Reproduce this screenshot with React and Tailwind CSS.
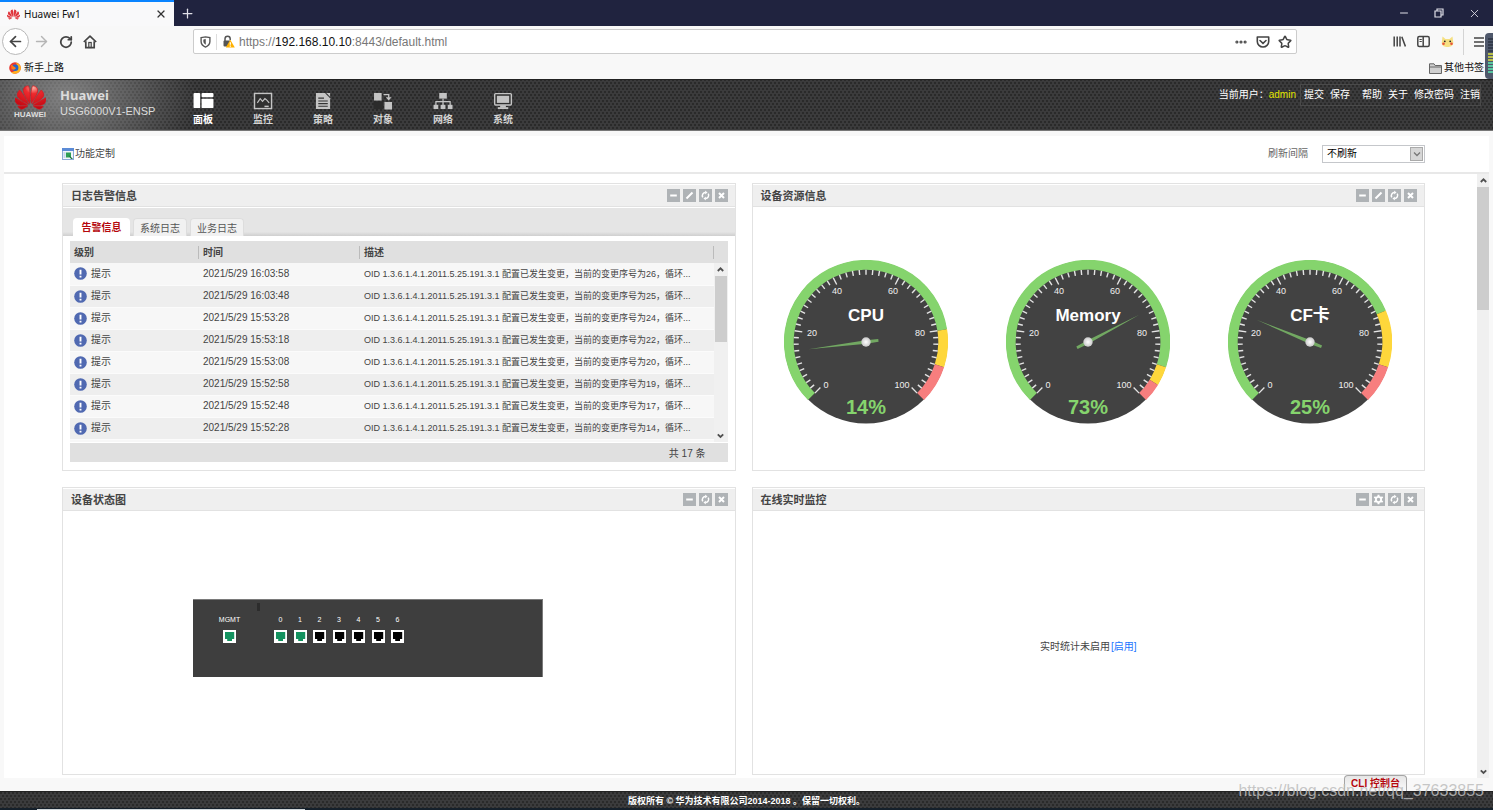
import React from 'react';
import { ArrowLeft, ArrowRight, House, Minus, Plus, RotateCw, Star, X, Ellipsis, Menu } from 'lucide-react';
import { SiHuawei } from 'react-icons/si';

const NAV_ITEMS = [
    {
        label: '面板',
        active: true,
        icon: (
            <g fill="#fff">
                <rect x="0" y="1" width="7" height="16" rx="1" />
                <rect x="8.5" y="1" width="12.5" height="4.5" rx="1" />
                <rect x="8.5" y="7" width="12.5" height="10" rx="1" />
            </g>
        ),
    },
    {
        label: '监控',
        icon: (
            <g fill="none" stroke="#c4c4c4">
                <rect x="1" y="1.5" width="18" height="16" fill="#303030" strokeWidth="1.5" />
                <path d="M4 11.5 L7 7 L9.5 10 L12 7 L14 8.5 L16.5 11.5" strokeWidth="1.2" />
                <path d="M11.5 15.2h4.5" strokeWidth="1.6" />
            </g>
        ),
    },
    {
        label: '策略',
        icon: (
            <g>
                <path d="M2.5 1H12L17.5 6.5V18H2.5Z" fill="#c4c4c4" />
                <path d="M13.5 1H17.5V5Z" fill="#c4c4c4" />
                <path d="M5 6.5h6M5 9.5h10M5 12.3h10M5 15h10" stroke="#333" strokeWidth="1.2" />
            </g>
        ),
    },
    {
        label: '对象',
        icon: (
            <g>
                <rect x="0" y="10" width="10" height="8" fill="#2b2b2b" />
                <rect x="0.5" y="1" width="8" height="8" fill="#c4c4c4" />
                <rect x="11.5" y="10.5" width="8" height="8" fill="#c4c4c4" />
                <path d="M10.5 2.8H16V6" fill="none" stroke="#c4c4c4" strokeWidth="1.4" />
                <path d="M13 5.5h6L16 9Z" fill="#c4c4c4" />
            </g>
        ),
    },
    {
        label: '网络',
        icon: (
            <g fill="#c4c4c4">
                <rect x="6" y="1" width="8" height="6" />
                <rect x="0" y="13.5" width="5" height="4.5" />
                <rect x="7.5" y="13.5" width="5" height="4.5" />
                <rect x="15" y="13.5" width="5" height="4.5" />
                <path d="M10 7v7M2.5 14V10.2H17.5V14" fill="none" stroke="#c4c4c4" strokeWidth="1.3" />
            </g>
        ),
    },
    {
        label: '系统',
        icon: (
            <g fill="#c4c4c4">
                <rect x="1.2" y="1.7" width="17.6" height="12" rx="1" fill="#303030" stroke="#c4c4c4" strokeWidth="1.5" />
                <rect x="3.5" y="4" width="13" height="7.5" />
                <rect x="7" y="14" width="6" height="2.5" />
                <rect x="4.5" y="16" width="11" height="2" />
            </g>
        ),
    },
];

const ALARMS = [
    { time: '2021/5/29 16:03:58', seq: 26 },
    { time: '2021/5/29 16:03:48', seq: 25 },
    { time: '2021/5/29 15:53:28', seq: 24 },
    { time: '2021/5/29 15:53:18', seq: 22 },
    { time: '2021/5/29 15:53:08', seq: 20 },
    { time: '2021/5/29 15:52:58', seq: 19 },
    { time: '2021/5/29 15:52:48', seq: 17 },
    { time: '2021/5/29 15:52:28', seq: 14 },
];

const GAUGES = [
    { title: 'CPU', value: 14, warn: 80, critical: 90 },
    { title: 'Memory', value: 73, warn: 90, critical: 95 },
    { title: 'CF卡', value: 25, warn: 75, critical: 90 },
];

const PORTS = [
    { label: '0', up: true },
    { label: '1', up: true },
    { label: '2', up: false },
    { label: '3', up: false },
    { label: '4', up: false },
    { label: '5', up: false },
    { label: '6', up: false },
];

const MESH =
    'bg-[#3b3b3c] bg-[radial-gradient(circle_at_1px_1px,#2a2a2a_1px,transparent_1px),radial-gradient(circle_at_3px_4px,#2a2a2a_1px,transparent_1px)] bg-[length:4px_6px]';

// 0-100 on the dial runs over 270 degrees, starting bottom left
function polar(percent, radius) {
    const a = ((225 - percent * 2.7) * Math.PI) / 180;
    return [82 + radius * Math.cos(a), 82 - radius * Math.sin(a)];
}

function Band({ from, to, color }) {
    const [x1, y1] = polar(from, 77.2);
    const [x2, y2] = polar(to, 77.2);
    const large = (to - from) * 2.7 > 180 ? 1 : 0;
    return (
        <path
            d={`M${x1} ${y1} A77.2 77.2 0 ${large} 1 ${x2} ${y2}`}
            fill="none"
            stroke={color}
            strokeWidth="9.8"
        />
    );
}

function Gauge({ title, value, warn, critical }) {
    const ticks = Array.from({ length: 51 }, (_, i) => i * 2);
    const labels = [
        [0, 42, 128],
        [20, 28, 76],
        [40, 53, 34],
        [60, 109, 34],
        [80, 136, 76],
        [100, 118, 128],
    ];
    return (
        <svg className="w-41 h-41 shrink-0" viewBox="0 0 164 164" fontFamily="Liberation Sans, Noto Sans CJK SC, sans-serif">
            <defs>
                <radialGradient id="hub">
                    <stop offset="0" stopColor="#fff" />
                    <stop offset="1" stopColor="#c9c9c9" />
                </radialGradient>
            </defs>
            <circle cx="82" cy="82" r="81.5" fill="#424242" />
            <Band from={0} to={warn} color="#85d46d" />
            <Band from={warn} to={critical} color="#fed73b" />
            <Band from={critical} to={100} color="#f77e7e" />
            {ticks.map((t) => {
                const [x1, y1] = polar(t, 72.3);
                const [x2, y2] = polar(t, t % 20 === 0 ? 64.5 : 67.3);
                return <line key={t} x1={x1} y1={y1} x2={x2} y2={y2} stroke="#e4e4e4" strokeWidth="1.4" />;
            })}
            {labels.map(([text, x, y]) => (
                <text key={text} x={x} y={y} fontSize="9" fill="#f0f0f0" textAnchor="middle">
                    {text}
                </text>
            ))}
            <text x="82" y="61" fontSize="17" fontWeight="bold" fill="#fff" textAnchor="middle">
                {title}
            </text>
            <text x="82" y="154" fontSize="20" fontWeight="bold" fill="#85d46d" textAnchor="middle">
                {value}%
            </text>
            <path
                d="M69.5 80.6 L82 80.2 L140 82 L82 83.8 L69.5 83.4Z"
                fill="#72a862"
                transform={`rotate(${value * 2.7 - 225} 82 82)`}
            />
            <circle cx="82" cy="82" r="4.7" fill="url(#hub)" />
        </svg>
    );
}

const TOOL_ICONS = {
    minimize: <path d="M3.2 6.5h6.6" strokeWidth="2" />,
    edit: <path d="M3.5 9.5 L9.5 3.5" strokeWidth="2" />,
    settings: (
        <g>
            <circle cx="6.5" cy="6.5" r="2.6" strokeWidth="1.8" />
            <path d="M6.5 1.8v2M6.5 9.2v2M2.3 4l1.8 1.1M8.9 7.9L10.7 9M2.3 9l1.8-1.1M8.9 5.1L10.7 4" strokeWidth="2" />
        </g>
    ),
    refresh: (
        <g strokeWidth="1.5">
            <path d="M3.8 8.3A3.2 3.2 0 0 1 6.6 3.4M9.2 4.7A3.2 3.2 0 0 1 6.4 9.6" />
            <path d="M6.2 1.8 L8.4 3.5 L6.2 5.2ZM6.8 7.8 L4.6 9.5 L6.8 11.2Z" fill="#fff" strokeWidth="0.2" />
        </g>
    ),
    close: <path d="M4 4l5 5M9 4L4 9" strokeWidth="2" />,
};

function Panel({ title, tools, children }) {
    return (
        <section className="flex flex-col min-w-0 bg-white border border-[#e2e2e2]">
            <header className="flex items-center justify-between h-[23px] shrink-0 pl-2 pr-[7px] bg-[#efefef] border-t border-t-white border-b border-b-[#e2e2e2]">
                <h2 className="text-[11px] leading-4 font-bold text-[#444]">{title}</h2>
                <div className="flex gap-[3px]">
                    {tools.map((tool) => (
                        <button key={tool} type="button" aria-label={tool} className="w-[13px] h-[13px] bg-[#afb3b6]">
                            <svg viewBox="0 0 13 13" className="block w-full h-full" fill="none" stroke="#fff">
                                {TOOL_ICONS[tool]}
                            </svg>
                        </button>
                    ))}
                </div>
            </header>
            {children}
        </section>
    );
}

function ScrollArrow({ up }) {
    return (
        <svg viewBox="0 0 13 13" className="block w-[13px] h-[13px] shrink-0" fill="none" stroke="#505050" strokeWidth="1.8">
            <path d={up ? 'M3.8 8 L6.5 5.3 L9.2 8' : 'M3.8 5.3 L6.5 8 L9.2 5.3'} />
        </svg>
    );
}

function BrowserChrome() {
    return (
        <div className="relative shrink-0 bg-[#f8f8f8] text-[#333]">
            <div className="flex h-[26px] bg-[#20233f] text-[#e0e0e8]">
                <div className="flex items-center w-[174px] h-full px-[7px] bg-[#f9f9fa] border-t-2 border-t-[#0a84ff] text-[#111]">
                    <SiHuawei className="w-[13px] h-[13px] text-[#e0353c]" />
                    <span className="ml-1 text-[10px] leading-4 font-['Noto_Sans','Noto_Sans_CJK_SC',sans-serif]">Huawei Fw1</span>
                    <button type="button" aria-label="关闭标签页" className="ml-auto text-[#333]">
                        <X size={12} strokeWidth={2.4} />
                    </button>
                </div>
                <button type="button" aria-label="新标签页" className="px-[6px]">
                    <Plus size={15} strokeWidth={2} />
                </button>
                <div className="flex items-center gap-6 ml-auto pr-3">
                    <button type="button" aria-label="最小化">
                        <Minus size={12} strokeWidth={2} />
                    </button>
                    <button type="button" aria-label="还原">
                        <svg viewBox="0 0 10 10" className="block w-[10px] h-[10px]" fill="none" stroke="currentColor">
                            <path d="M1 3h6v6H1zM3 3V1h6v6H7" strokeWidth="1.2" />
                        </svg>
                    </button>
                    <button type="button" aria-label="关闭">
                        <X size={13} strokeWidth={1.6} />
                    </button>
                </div>
            </div>

            <div className="flex items-center h-[31px] pl-[2px] pr-2 text-[#444]">
                <button type="button" aria-label="后退" className="flex items-center justify-center w-[27px] h-[27px] rounded-full border border-[#b8b8b8] bg-white">
                    <ArrowLeft size={17} strokeWidth={2.4} />
                </button>
                <button type="button" aria-label="前进" className="ml-1 text-[#b5b5b5]">
                    <ArrowRight size={17} strokeWidth={2} />
                </button>
                <button type="button" aria-label="刷新" className="ml-[9px]">
                    <RotateCw size={14} strokeWidth={3} />
                </button>
                <button type="button" aria-label="主页" className="ml-[10px]">
                    <svg viewBox="0 0 14 14" className="block w-[14px] h-[14px]" fill="none" stroke="currentColor" strokeWidth="1.7">
                        <path d="M.8 7 L7 1.2 L13.2 7" strokeLinejoin="round" />
                        <path d="M2.8 6.2V12.6H11.2V6.2" />
                        <rect x="5.8" y="7.5" width="2.4" height="5" strokeWidth="1.2" />
                    </svg>
                </button>
                <div className="flex items-center flex-1 h-[25px] ml-[96px] mr-[96px] pl-[6px] pr-1 bg-white border border-[#ccc] rounded-xs">
                    <svg viewBox="0 0 12 13" className="w-[11px] h-3" fill="none" stroke="#555" strokeWidth="1.5">
                        <path d="M1.2 1.8 L6 .9 L10.8 1.8 V6 C10.8 9 8.5 11 6 12 C3.5 11 1.2 9 1.2 6Z" />
                        <path d="M6 3.6V9C4.6 8 4 7 4 5.6V4Z" fill="#555" strokeWidth="0.6" />
                    </svg>
                    <span className="w-px h-4 mx-[5px] bg-[#ddd]" />
                    <svg viewBox="0 0 13 13" className="w-[13px] h-[13px]">
                        <path d="M3 6V3.8A2.6 2.6 0 0 1 8.2 3.8V5" fill="none" stroke="#555" strokeWidth="1.5" />
                        <rect x="1.5" y="5.5" width="7" height="6" rx="1" fill="#555" />
                        <path d="M8.3 4.8 L12.8 12.6 H3.8Z" fill="#ffb100" />
                        <path d="M8.3 7.3v2.5M8.3 10.5v1.2" stroke="#fff" strokeWidth="1.2" />
                    </svg>
                    <div
                        role="textbox"
                        aria-label="地址栏"
                        tabIndex={0}
                        className="ml-1 text-[12px] leading-4 text-[#777]"
                    >
                        https://<span className="text-[#111]">192.168.10.10</span>:8443/default.html
                    </div>
                    <div className="flex items-center gap-[8px] ml-auto">
                        <Ellipsis size={14} strokeWidth={3.4} />
                        <svg viewBox="0 0 14 14" className="w-[14px] h-[14px]" fill="none" stroke="currentColor" strokeWidth="1.6">
                            <path d="M1.3 2H12.7V6.5A5.7 5.5 0 0 1 1.3 6.5Z" strokeLinejoin="round" />
                            <path d="M4 5.5 L7 8.3 L10 5.5" strokeLinecap="round" />
                        </svg>
                        <Star size={14} strokeWidth={2.6} />
                    </div>
                </div>
                <div className="flex items-center h-full gap-[11px]">
                    <svg viewBox="0 0 13 13" className="w-[13px] h-[13px]" fill="none" stroke="currentColor" strokeWidth="1.5">
                        <path d="M1.2 1.5v10M4.2 1.5v10M7 1.5v10M8.8 1.8l3.6 9.6" />
                    </svg>
                    <svg viewBox="0 0 13 13" className="w-[13px] h-[13px]" fill="none" stroke="currentColor" strokeWidth="1.5">
                        <rect x="0.8" y="1.5" width="11.4" height="10" rx="1.5" />
                        <path d="M6.2 1.5v10" />
                        <path d="M2.5 4.5h2.3M2.5 6.5h2.3" strokeWidth="1" />
                    </svg>
                    <svg viewBox="0 0 13 13" className="w-[13px] h-[13px]">
                        <path d="M1.5 1.5 L4.5 4 H8.5 L11.5 1.5 L12.3 8 C12 11 9.5 12 6.5 12 C3.5 12 1 11 .7 8Z" fill="#f5e083" />
                        <circle cx="3.8" cy="6.3" r=".9" fill="#222" />
                        <circle cx="9.2" cy="6.3" r=".9" fill="#222" />
                        <circle cx="2.5" cy="8.8" r="1.3" fill="#e8533c" />
                        <circle cx="10.5" cy="8.8" r="1.3" fill="#e8533c" />
                    </svg>
                    <span className="w-px h-[26px] -mx-[2px] bg-[#d4d4d4]" />
                    <svg viewBox="0 0 12 12" className="w-3 h-3" stroke="currentColor" strokeWidth="1.5">
                        <path d="M1 2h10M1 6h10M1 10h10" />
                    </svg>
                </div>
            </div>

            <div className="flex items-center h-[22px] px-[9px] text-[10px] leading-4 text-[#111]">
                <a href="#start" className="flex items-center gap-[3px]">
                    <svg viewBox="0 0 12 12" className="w-3 h-3">
                        <circle cx="6" cy="6" r="5.8" fill="#e8372f" />
                        <path d="M6 11.8A5.8 5.8 0 0 0 11.5 4C10 1.5 8 1 7 .5C9 5 9 9 2 10.2A5.8 5.8 0 0 0 6 11.8Z" fill="#ffb21e" />
                        <circle cx="6.2" cy="5.8" r="3.2" fill="#2266c9" />
                        <path d="M2 3 C4 3 5 5 7 6 C6 8 4 8 2.5 7Z" fill="#ff7a1a" />
                    </svg>
                    新手上路
                </a>
                <a href="#bookmarks" className="flex items-center gap-[2px] ml-auto">
                    <svg viewBox="0 0 13 11" className="w-[13px] h-[11px]" fill="#cfcfcf" stroke="#666" strokeWidth="1">
                        <path d="M.5 10.5V.8H5L6.2 2.5H12.5V10.5ZM.5 4H12.5" />
                    </svg>
                    其他书签
                </a>
            </div>

            {/* level meter docked on the window edge */}
            <div className="absolute right-0 top-[33px] w-2 h-[46px] pt-[5px] pl-[3px] rounded-l-sm bg-[#4f586b]">
                <div className="h-[15px] bg-[repeating-linear-gradient(#343c4c_0_2px,transparent_2px_3px)]" />
                <div className="h-[9px] bg-[repeating-linear-gradient(#b9bf4a_0_2px,transparent_2px_3px)]" />
                <div className="h-[12px] bg-[repeating-linear-gradient(#58c5a0_0_2px,transparent_2px_3px)]" />
            </div>
        </div>
    );
}

function Header() {
    return (
        <header className={`shrink-0 ${MESH}`}>
            <div className="flex h-[52px] border-t border-t-[#222] border-b border-b-[#777] bg-[radial-gradient(ellipse_130px_90px_at_66px_16px,rgba(190,190,190,0.55),transparent)] text-white">
                <div className="flex flex-col items-center w-[60px] pt-[2px]">
                    <svg width="0" height="0" className="absolute">
                        <defs>
                            <radialGradient id="petal" cx="0.58" cy="0.08" r="0.85">
                                <stop offset="0" stopColor="#f9b3a6" />
                                <stop offset="0.3" stopColor="#ee2a2e" />
                                <stop offset="1" stopColor="#c40a14" />
                            </radialGradient>
                        </defs>
                    </svg>
                    <SiHuawei size={31} style={{ fill: 'url(#petal)', stroke: '#d8161e', strokeWidth: 0.5 }} />
                    <span className="-mt-[2px] text-[8px] leading-[8px] font-bold text-[#ddd]">HUAWEI</span>
                </div>
                <div className="w-[113px] pt-[7px] text-[#dcdcdc]">
                    <h1 className="text-[13px] leading-[17px] font-bold font-['Noto_Sans',sans-serif]">Huawei</h1>
                    <p className="text-[11px] leading-[15px] whitespace-nowrap">USG6000V1-ENSP</p>
                </div>
                <nav className="flex">
                    {NAV_ITEMS.map((item) => (
                        <a
                            key={item.label}
                            href="#nav"
                            className={`flex flex-col items-center w-[60px] pt-3 text-[10px] leading-[20px] font-bold ${item.active ? 'text-white' : 'text-[#d4d4d4]'}`}
                        >
                            <svg viewBox="0 0 21 19" className="w-[21px] h-[19px]">
                                {item.icon}
                            </svg>
                            {item.label}
                        </a>
                    ))}
                </nav>
                <div className="flex items-start ml-auto pt-1 pr-3 text-[10px] leading-[20px] whitespace-nowrap">
                    <span className="border-y border-transparent">当前用户：</span>
                    <span className="mr-1 border-y border-transparent text-[#e3e600]">admin</span>
                    <div className="flex gap-[6px] border border-[#4a4a4a] pl-[3px]">
                        <a href="#commit">提交</a>
                        <a href="#save">保存</a>
                        <a href="#help" className="ml-[6px]">帮助</a>
                        <a href="#about">关于</a>
                        <a href="#password">修改密码</a>
                        <a href="#logout">注销</a>
                    </div>
                </div>
            </div>
        </header>
    );
}

function AlarmPanel() {
    return (
        <Panel title="日志告警信息" tools={['minimize', 'edit', 'refresh', 'close']}>
            <div className="flex items-end gap-[3px] h-[28px] mt-px pl-[10px] shrink-0 bg-[linear-gradient(#e5e5e5_85%,#cfcfcf)] text-[10px] leading-[20px]">
                <button type="button" className="w-[57px] h-[18px] rounded-t-sm bg-white font-bold text-[#b5070d]">告警信息</button>
                <button type="button" className="w-[54px] h-[18px] rounded-t-sm border border-b-0 border-[#ddd] bg-[#f1f1f1] text-[#555]">系统日志</button>
                <button type="button" className="w-[54px] h-[18px] rounded-t-sm border border-b-0 border-[#ddd] bg-[#f1f1f1] text-[#555]">业务日志</button>
            </div>
            <div className="flex flex-col flex-1 min-h-0 pt-[5px] px-[7px] pb-2 text-[10px] text-[#444]">
                <div className="flex flex-1 min-h-0 overflow-hidden bg-[#f7f7f7]">
                    <div className="flex-1 min-w-0">
                        <table className="w-full table-fixed border-collapse text-left">
                            <thead>
                                <tr className="h-[22px] bg-[#e0e0e0]">
                                    <th className="w-[129px] p-0 pl-1"><span className="block leading-[13px] border-r border-[#bbb]">级别</span></th>
                                    <th className="w-[161px] p-0 pl-1"><span className="block leading-[13px] border-r border-[#bbb]">时间</span></th>
                                    <th className="p-0 pl-1"><span className="block leading-[13px] border-r border-[#bbb]">描述</span></th>
                                </tr>
                            </thead>
                            <tbody>
                                {ALARMS.map((row) => (
                                    <tr key={row.time} className="h-[22px] border-b border-[#fbfbfb] bg-[#f7f7f7] even:bg-[#eee]">
                                        <td className="p-0 pl-1">
                                            <span className="flex items-center gap-1 leading-[14px]">
                                                <svg viewBox="0 0 13 13" className="w-[13px] h-[13px]">
                                                    <circle cx="6.5" cy="6.5" r="6.3" fill="#5069b1" />
                                                    <path d="M6.5 2.8v4.6M6.5 8.7v1.7" stroke="#fff" strokeWidth="1.9" />
                                                </svg>
                                                提示
                                            </span>
                                        </td>
                                        <td className="p-0 pl-1 leading-[14px]">{row.time}</td>
                                        <td className="p-0 pl-1 text-[9px] leading-[14px] whitespace-nowrap overflow-hidden">
                                            OID 1.3.6.1.4.1.2011.5.25.191.3.1 配置已发生变更，当前的变更序号为{row.seq}，循环...
                                        </td>
                                    </tr>
                                ))}
                            </tbody>
                        </table>
                    </div>
                    <div className="flex flex-col w-[14px] bg-[#f0f0f0]">
                        <div className="h-[22px] shrink-0 bg-[#e0e0e0]" />
                        <ScrollArrow up />
                        <div className="h-[66px] mx-px bg-[#cdcdcd]" />
                        <div className="mt-auto">
                            <ScrollArrow />
                        </div>
                    </div>
                </div>
                <div className="h-[19px] mt-px shrink-0 pr-[22px] bg-[#e0e0e0] text-right leading-[21px]">共 17 条</div>
            </div>
        </Panel>
    );
}

function Port({ label, up }) {
    return (
        <div className="flex flex-col items-center w-[13px]">
            <span className="text-[7px] leading-[10px]">{label}</span>
            <svg viewBox="0 0 13 13" className="w-[13px] h-[13px] mt-[5px]">
                <rect width="13" height="13" fill="#fff" />
                <path d="M2 2H11.2V9H9V11H4.2V9H2Z" fill={up ? '#14925f' : '#000'} />
            </svg>
        </div>
    );
}

export default function App() {
    return (
        <div className="relative flex flex-col h-screen overflow-hidden bg-[#f8f8f8] font-['Liberation_Sans','Noto_Sans_CJK_SC',sans-serif] text-[#444]">
            <BrowserChrome />
            <Header />

            <main className="flex flex-col flex-1 min-h-0 mt-[5px] mx-1 mb-[13px] bg-white">
                <div className="flex items-center h-[38px] shrink-0 pl-[58px] pr-16 border-b-2 border-[#e8e8e8] text-[10px] leading-4">
                    <button type="button" className="flex items-center gap-px">
                        <svg viewBox="0 0 12 12" className="w-3 h-3">
                            <rect x=".5" y=".5" width="11" height="11" fill="#f1f6fc" stroke="#8aa9d6" />
                            <rect x="0" y="0" width="12" height="3" fill="#5b8bd6" />
                            <path d="M1.5 5h2M1.5 7h2M1.5 9h2" stroke="#8aa9d6" strokeWidth=".8" />
                            <rect x="4" y="4.5" width="5" height="5" fill="#2f9e55" />
                            <path d="M6.5 7l4.5 3.8-2 .2Z" fill="#116a34" />
                        </svg>
                        功能定制
                    </button>
                    <label htmlFor="interval" className="ml-auto text-[#666]">刷新间隔</label>
                    <div className="relative ml-[14px]">
                        <select id="interval" className="block w-[103px] h-[18px] pl-1 border border-[#c5c7cb] bg-white text-[10px] leading-4 text-black appearance-none">
                            <option>不刷新</option>
                        </select>
                        <span className="absolute right-[2px] top-[2px] flex items-center justify-center w-[13px] h-[14px] border border-[#aaa] bg-[#d6d6d6] pointer-events-none">
                            <svg viewBox="0 0 8 6" className="w-2 h-[6px]" fill="none" stroke="#777" strokeWidth="1.3">
                                <path d="M1 1.5 L4 4.5 L7 1.5" />
                            </svg>
                        </span>
                    </div>
                </div>

                <div className="flex flex-1 min-h-0">
                    <div className="grid flex-1 min-w-0 grid-cols-2 grid-rows-2 gap-4 pt-[9px] pb-[3px] pl-[58px] pr-[52px]">
                        <AlarmPanel />

                        <Panel title="设备资源信息" tools={['minimize', 'edit', 'refresh', 'close']}>
                            <div className="flex flex-1 items-center justify-center gap-[58px] pt-[6px]">
                                {GAUGES.map((gauge) => (
                                    <Gauge key={gauge.title} {...gauge} />
                                ))}
                            </div>
                        </Panel>

                        <Panel title="设备状态图" tools={['minimize', 'refresh', 'close']}>
                            <div className="flex flex-1 items-center pb-[10px] pl-[130px]">
                                <div className="relative flex w-[350px] h-[78px] pt-[15px] pl-[30px] border-t border-r border-[#7a7a7a] bg-[#3e3e3e] text-white">
                                    <span className="absolute left-16 top-[3px] w-[3px] h-2 bg-[#2c2c2c]" />
                                    <Port label="MGMT" up />
                                    <div className="flex justify-between w-[130px] ml-[38px]">
                                        {PORTS.map((port) => (
                                            <Port key={port.label} {...port} />
                                        ))}
                                    </div>
                                </div>
                            </div>
                        </Panel>

                        <Panel title="在线实时监控" tools={['minimize', 'settings', 'refresh', 'close']}>
                            <div className="flex flex-1 items-center justify-center gap-px pt-2 text-[10px] leading-4">
                                实时统计未启用
                                <a href="#enable" className="text-[#1a75ff]">[启用]</a>
                            </div>
                        </Panel>
                    </div>
                    <div className="flex flex-col items-center w-3 bg-[#f0f0f0]">
                        <ScrollArrow up />
                        <div className="w-full h-[123px] bg-[#cdcdcd]" />
                        <div className="mt-auto">
                            <ScrollArrow />
                        </div>
                    </div>
                </div>
            </main>

            <footer className={`shrink-0 h-[19px] border-t border-t-[#222] border-b-2 border-b-[#15202b] text-center text-[9px] leading-[18px] font-bold text-white ${MESH}`}>
                版权所有 © 华为技术有限公司2014-2018 。保留一切权利。
            </footer>

            <span className="absolute left-[37px] bottom-0 w-[268px] h-px bg-[#d0d6da]" />
            <button
                type="button"
                className="absolute right-[86px] bottom-[19px] w-[63px] h-4 rounded-t-sm border border-b-0 border-[#a5a5a5] bg-[linear-gradient(#e6e6e6,#fafafa)] text-[10px] leading-[15px] font-bold text-[#b5070d]"
            >
                CLI 控制台
            </button>
            <span className="absolute right-[9px] bottom-[9px] text-[16px] leading-5 text-[#bdbdbd]/85 pointer-events-none">
                https://blog.csdn.net/qq_37633855
            </span>
        </div>
    );
}
